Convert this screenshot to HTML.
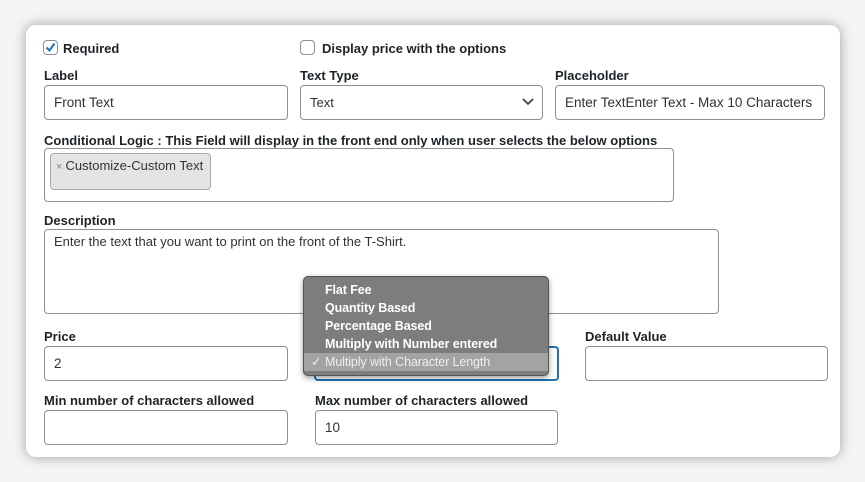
<html><head><style>
body{margin:0;width:865px;height:482px;background:#f4f4f4;font-family:"Liberation Sans",sans-serif;position:relative;overflow:hidden}
.card{position:absolute;left:26px;top:25px;width:814px;height:432px;background:#fff;border-radius:10px;box-shadow:0 0 12px rgba(0,0,0,.35)}
.a{position:absolute}
.lb{font-size:13px;font-weight:bold;color:#1d2327}
.in{position:absolute;box-sizing:border-box;border:1px solid #8c8f94;border-radius:4px;background:#fff;font-size:13.5px;color:#2c3338;padding-left:9px;display:flex;align-items:center}
.cb{position:absolute;width:15px;height:15px;box-sizing:border-box;border:1px solid #8c8f94;border-radius:4px;background:#fff}
.menu{position:absolute;left:303px;top:276px;width:246px;height:100px;background:#7d7d7d;border:1px solid #555;border-radius:5px;box-sizing:border-box;box-shadow:0 2px 6px rgba(0,0,0,.4);padding-top:4px}
.menu div{height:18px;line-height:18px;font-size:12.5px;font-weight:bold;color:#fff;padding-left:21px;letter-spacing:-0.1px}
.menu .s{background:#a3a3a3;color:#eee;font-weight:normal;position:relative}
</style></head><body>
<div class="card"></div>
<div class="cb" style="left:43px;top:40px"></div><svg class="a" style="left:43px;top:40px" width="15" height="15"><path d="M3.5 7.5l3 3 5-7" fill="none" stroke="#2271b1" stroke-width="2"/></svg>
<div class="a lb" style="left:63px;top:41px">Required</div>
<div class="cb" style="left:300px;top:40px"></div>
<div class="a lb" style="left:322px;top:41px">Display price with the options</div>
<div class="a lb" style="left:44px;top:68px">Label</div>
<div class="a lb" style="left:300px;top:68px">Text Type</div>
<div class="a lb" style="left:555px;top:68px">Placeholder</div>
<div class="in" style="left:44px;top:85px;width:244px;height:35px">Front Text</div>
<div class="in" style="left:300px;top:85px;width:243px;height:35px;font-size:13px">Text<svg class="a" style="right:8px;top:12px" width="12" height="8"><path d="M1 1l5 5 5-5" fill="none" stroke="#333" stroke-width="1.6"/></svg></div>
<div class="in" style="left:555px;top:85px;width:270px;height:35px">Enter TextEnter Text - Max 10 Characters</div>
<div class="a lb" style="left:44px;top:133px">Conditional Logic : This Field will display in the front end only when user selects the below options</div>
<div class="in" style="left:44px;top:148px;width:630px;height:54px"></div>
<div class="a" style="left:50px;top:153px;width:161px;height:37px;box-sizing:border-box;background:#e4e4e4;border:1px solid #aaa;border-radius:4px;font-size:13px;color:#333;padding:4px 0 0 5px"><span style="color:#888;font-size:11px">× </span>Customize-Custom Text</div>
<div class="a lb" style="left:44px;top:213px">Description</div>
<div class="in" style="left:44px;top:229px;width:675px;height:85px;align-items:flex-start;padding-top:4px;font-size:13px">Enter the text that you want to print on the front of the T-Shirt.</div>
<div class="a lb" style="left:44px;top:329px">Price</div>
<div class="a lb" style="left:585px;top:329px">Default Value</div>
<div class="in" style="left:44px;top:346px;width:244px;height:35px">2</div>
<div class="in" style="left:314px;top:346px;width:245px;height:35px;border:2px solid #2271b1"></div>
<div class="in" style="left:585px;top:346px;width:243px;height:35px"></div>
<div class="a lb" style="left:44px;top:393px">Min number of characters allowed</div>
<div class="a lb" style="left:315px;top:393px">Max number of characters allowed</div>
<div class="in" style="left:44px;top:410px;width:244px;height:35px"></div>
<div class="in" style="left:315px;top:410px;width:243px;height:35px">10</div>
<div class="menu"><div>Flat Fee</div><div>Quantity Based</div><div>Percentage Based</div><div>Multiply with Number entered</div><div class="s"><span style="position:absolute;left:7px">✓</span>Multiply with Character Length</div></div>
</body></html>
